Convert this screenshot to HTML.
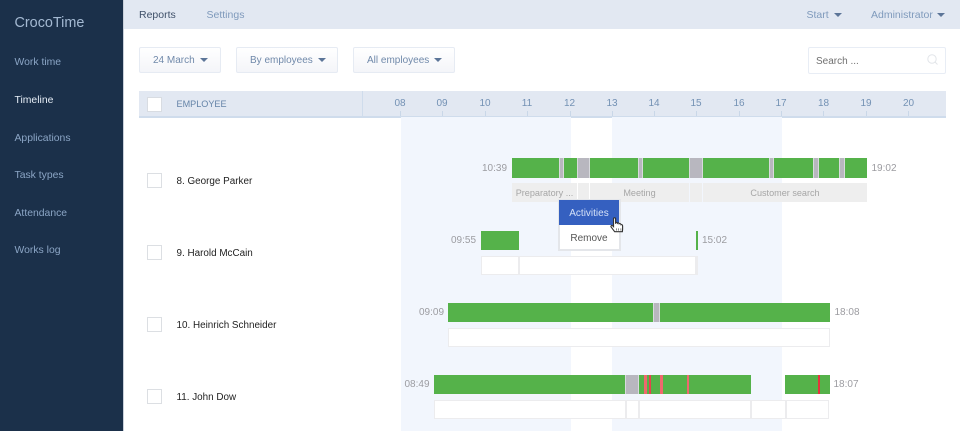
<!DOCTYPE html>
<html><head><meta charset="utf-8">
<style>
html,body{margin:0;padding:0;width:960px;height:431px;overflow:hidden;background:#fff;font-family:"Liberation Sans",sans-serif;font-size:10px}
.a,.t,.s,.g,.w,.l,.b{position:absolute}
.t{white-space:nowrap;line-height:14px}
.nav{left:14.5px;color:#8ba5c5;font-size:10.4px}
.top{top:8px;color:#7f9abc;font-size:10.5px}
.b{top:47px;height:24px;background:linear-gradient(#fff,#f4f5f9);border:1px solid #e6ebf3;border-radius:2px;color:#7089aa;line-height:26px;text-align:left;font-size:10px;white-space:nowrap}
.car{display:inline-block;width:0;height:0;border-left:4px solid transparent;border-right:4px solid transparent;border-top:4.5px solid #5c7598;vertical-align:1px;margin-left:5px}
.h{top:97px;color:#7391b4;font-size:10px;width:30px;text-align:center;margin-left:-15px}
.tick{top:111px;width:1px;height:5px;background:#c9d7e8}
.s{background:#f2f6fd;top:117px;height:314px}
.g{background:#55b24a}
.y{position:absolute;background:#b8b7bf;border-left:1px solid #d8dadd;border-right:1px solid #d8dadd;box-sizing:border-box}
.p{position:absolute;background:#f0686e}
.l{background:#eee;color:#a6a6a6;text-align:center;line-height:20px;height:19px;font-size:9.1px;overflow:hidden;white-space:nowrap}
.w{background:#fff;border:1px solid #ececee;box-sizing:border-box;height:19px}
.cb{position:absolute;left:147px;width:13px;height:13px;background:#fff;border:1px solid #dcdfe3}
.n{left:176.5px;color:#222;font-size:9.9px}
.tm{color:#9c9ca1;font-size:10px}
</style></head>
<body>
<!-- sidebar -->
<div class="a" style="left:0;top:0;width:123px;height:431px;background:#1b304a"></div>
<div class="a" style="left:123px;top:0;width:1px;height:431px;background:#c9d0da"></div>
<div class="t" style="left:14.5px;top:14px;color:#a4b9d2;font-size:14.4px;line-height:18px">CrocoTime</div>
<div class="t nav" style="top:56px">Work time</div>
<div class="t nav" style="top:94px;color:#e6edf6">Timeline</div>
<div class="t nav" style="top:132px">Applications</div>
<div class="t nav" style="top:169px">Task types</div>
<div class="t nav" style="top:207px">Attendance</div>
<div class="t nav" style="top:244px">Works log</div>

<!-- topbar -->
<div class="a" style="left:124px;top:0;width:836px;height:29px;background:#e2e8f2"></div>
<div class="t top" style="left:139px;color:#3f5069">Reports</div>
<div class="t top" style="left:206.5px">Settings</div>
<div class="t top" style="left:806.5px">Start<span class="car" style="margin-left:5px"></span></div>
<div class="t top" style="left:871px">Administrator<span class="car" style="margin-left:4px"></span></div>

<!-- buttons -->
<div class="b" style="left:139px;width:80px"><span style="margin-left:13px">24 March</span><span class="car"></span></div>
<div class="b" style="left:236px;width:100px"><span style="margin-left:13px">By employees</span><span class="car"></span></div>
<div class="b" style="left:353px;width:100px"><span style="margin-left:13px">All employees</span><span class="car"></span></div>
<div class="a" style="left:808px;top:47px;width:136px;height:25px;background:#fff;border:1px solid #e8edf5;border-radius:2px"></div>
<div class="t" style="left:816px;top:55px;color:#707070;font-size:10px">Search ...</div>
<svg class="a" style="left:926px;top:53px" width="13" height="13" viewBox="0 0 13 13"><circle cx="6" cy="6" r="4.2" fill="none" stroke="#e2e5e9" stroke-width="1"/><path d="M9 9l2.5 2.500" stroke="#e2e5e9" stroke-width="1"/></svg>

<!-- table head -->
<div class="a" style="left:139px;top:91px;width:807px;height:25px;background:#e2e8f2"></div>
<div class="a" style="left:139px;top:116px;width:807px;height:1.5px;background:#cfdcec"></div>
<div class="a" style="left:362px;top:91px;width:1px;height:25px;background:#cfdcec"></div>
<div class="cb" style="top:97px;border-color:#d8dce2"></div>
<div class="t" style="left:176.5px;top:97px;color:#6584a8;font-size:9.1px">EMPLOYEE</div>
<div class="t h" style="left:400px">08</div><div class="t h" style="left:442px">09</div><div class="t h" style="left:485px">10</div><div class="t h" style="left:527px">11</div><div class="t h" style="left:569.5px">12</div><div class="t h" style="left:612px">13</div><div class="t h" style="left:654px">14</div><div class="t h" style="left:696px">15</div><div class="t h" style="left:739px">16</div><div class="t h" style="left:781px">17</div><div class="t h" style="left:823.5px">18</div><div class="t h" style="left:866px">19</div><div class="t h" style="left:908.5px">20</div>
<div class="a tick" style="left:400px"></div><div class="a tick" style="left:442px"></div><div class="a tick" style="left:485px"></div><div class="a tick" style="left:527px"></div><div class="a tick" style="left:570px"></div><div class="a tick" style="left:612px"></div><div class="a tick" style="left:654px"></div><div class="a tick" style="left:696px"></div><div class="a tick" style="left:739px"></div><div class="a tick" style="left:781px"></div><div class="a tick" style="left:823px"></div><div class="a tick" style="left:866px"></div><div class="a tick" style="left:908px"></div>

<!-- shaded -->
<div class="s" style="left:401px;width:170px"></div>
<div class="s" style="left:612px;width:170px"></div>

<!-- names -->
<div class="cb" style="top:173px"></div><div class="t n" style="top:175px">8. George Parker</div>
<div class="cb" style="top:245px"></div><div class="t n" style="top:247px">9. Harold McCain</div>
<div class="cb" style="top:317px"></div><div class="t n" style="top:319px">10. Heinrich Schneider</div>
<div class="cb" style="top:389px"></div><div class="t n" style="top:391px">11. John Dow</div>

<!-- row 1 -->
<div class="t tm" style="left:482px;top:162px">10:39</div>
<div class="a g" style="left:512px;top:158px;width:355px;height:20px"></div>
<div class="y" style="left:559px;top:158px;width:5px;height:20px"></div>
<div class="y" style="left:577px;top:158px;width:13px;height:20px"></div>
<div class="y" style="left:638px;top:158px;width:5px;height:20px"></div>
<div class="y" style="left:689px;top:158px;width:14px;height:20px"></div>
<div class="y" style="left:769px;top:158px;width:5px;height:20px"></div>
<div class="y" style="left:813px;top:158px;width:6px;height:20px"></div>
<div class="y" style="left:839px;top:158px;width:6px;height:20px"></div>
<div class="t tm" style="left:871.5px;top:162px">19:02</div>
<div class="a l" style="left:512px;top:183px;width:65px">Preparatory ...</div>
<div class="a l" style="left:578px;top:183px;width:11px"></div>
<div class="a l" style="left:590px;top:183px;width:99px">Meeting</div>
<div class="a l" style="left:690px;top:183px;width:12px"></div>
<div class="a l" style="left:703px;top:183px;width:164px">Customer search</div>

<!-- row 2 -->
<div class="t tm" style="left:451px;top:234px">09:55</div>
<div class="a g" style="left:481px;top:231px;width:38px;height:19px"></div>
<div class="a g" style="left:695.5px;top:231px;width:2.5px;height:19px"></div>
<div class="t tm" style="left:702px;top:234px">15:02</div>
<div class="a w" style="left:481px;top:256px;width:38px"></div>
<div class="a w" style="left:519px;top:256px;width:177px"></div>
<div class="a w" style="left:696px;top:256px;width:2px;background:#eee"></div>

<!-- row 3 -->
<div class="t tm" style="left:419px;top:306px">09:09</div>
<div class="a g" style="left:448px;top:303px;width:382px;height:19px"></div>
<div class="y" style="left:653px;top:303px;width:7px;height:19px"></div>
<div class="t tm" style="left:834.5px;top:306px">18:08</div>
<div class="a w" style="left:448px;top:328px;width:382px"></div>

<!-- row 4 -->
<div class="t tm" style="left:404.5px;top:378px">08:49</div>
<div class="a g" style="left:434px;top:375px;width:317px;height:19px"></div>
<div class="y" style="left:625px;top:375px;width:14px;height:19px"></div>
<div class="p" style="left:644px;top:375px;width:2.5px;height:19px"></div>
<div class="p" style="left:648.5px;top:375px;width:2px;height:19px;background:#e6434c"></div>
<div class="p" style="left:660px;top:375px;width:2.5px;height:19px"></div>
<div class="p" style="left:686.5px;top:375px;width:2.5px;height:19px"></div>
<div class="a g" style="left:785px;top:375px;width:44.5px;height:19px"></div>
<div class="p" style="left:817.5px;top:375px;width:2.5px;height:19px;background:#e6343c"></div>
<div class="t tm" style="left:833.5px;top:378px">18:07</div>
<div class="a w" style="left:434px;top:400px;width:192px"></div>
<div class="a w" style="left:626px;top:400px;width:13px"></div>
<div class="a w" style="left:639px;top:400px;width:112px"></div>
<div class="a w" style="left:751px;top:400px;width:35px"></div>
<div class="a w" style="left:786px;top:400px;width:43px"></div>

<!-- popup -->
<div class="a" style="left:557.5px;top:198.5px;width:63px;height:52.5px;background:#fff;border:2px solid #e4e6ea;box-sizing:border-box"></div>
<div class="a" style="left:559px;top:200px;width:60px;height:25px;background:#3560c0;color:#d6e2f8;text-align:center;line-height:27px;font-size:10px">Activities</div>
<div class="a" style="left:559px;top:226px;width:60px;height:23px;color:#555;text-align:center;line-height:26px;font-size:10px">Remove</div>
<svg class="a" style="left:609px;top:217px" width="17" height="17" viewBox="0 0 14 15"><path d="M3.500 1.500c0-1 1.800-1 1.800 0V6l.2-1c.8-.5 1.500 0 1.500.5.6-.5 1.500-.2 1.500.5.7-.4 1.600 0 1.600.8 .5-.2 1.400 0 1.400 1v3L11.300 13H4.500L1.500 9c-.8-1 .3-2 1.200-1.300l.8.8z" fill="#fff" stroke="#333" stroke-width="1"/><path d="M6 10v2M8 10v2M10 10v2" stroke="#555" stroke-width=".6"/></svg>
</body></html>
